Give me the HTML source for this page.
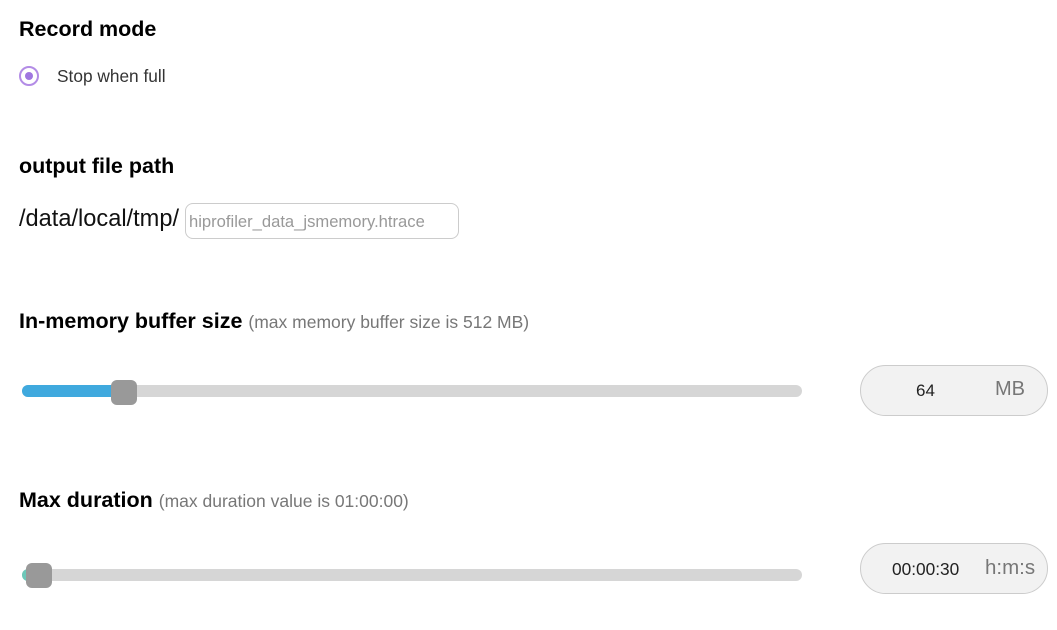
<!DOCTYPE html>
<html><head><style>
body{margin:0;width:1057px;height:630px;background:#fff;font-family:"Liberation Sans",sans-serif;position:relative;overflow:hidden}
.a{position:absolute;white-space:nowrap}
.t{font-weight:bold;font-size:21.5px;color:#000}
.g{font-weight:normal;font-size:17.5px;color:#777}
.track{position:absolute;left:22px;width:780px;height:12px;border-radius:6px;background:#d6d6d6}
.thumb{position:absolute;width:26px;height:25px;border-radius:6px;background:#999}
.box{position:absolute;left:860px;width:188px;height:51px;border-radius:26px;background:#f2f2f2;border:1px solid #ccc;box-sizing:border-box}
</style></head><body>
<div class="a t" style="left:19px;top:17px">Record mode</div>
<div class="a" style="left:19px;top:66px;width:20px;height:20px;border:2px solid #b38ce6;border-radius:50%;box-sizing:border-box"></div>
<div class="a" style="left:25px;top:72px;width:8px;height:8px;background:#a077e0;border-radius:50%"></div>
<div class="a" style="left:57px;top:66px;font-size:17.3px;color:#333">Stop when full</div>

<div class="a t" style="left:19px;top:154px">output file path</div>
<div class="a" style="left:19px;top:206px;font-size:23.6px;color:#111">/data/local/tmp/</div>
<div class="a" style="left:185px;top:203px;width:274px;height:36px;border:1px solid #ccc;border-radius:8px;box-sizing:border-box"></div>
<div class="a" style="left:189px;top:212px;font-size:16.6px;color:#999">hiprofiler_data_jsmemory.htrace</div>

<div class="a t" style="left:19px;top:309px">In-memory buffer size <span class="g">(max memory buffer size is 512 MB)</span></div>
<div class="track" style="top:385px"></div>
<div class="a" style="left:22px;top:385px;width:100px;height:12px;border-radius:6px;background:#3fa9de"></div>
<div class="thumb" style="left:111px;top:380px"></div>
<div class="box" style="top:365px"></div>
<div class="a" style="left:916px;top:381px;font-size:17px;color:#222">64</div>
<div class="a" style="left:995px;top:378px;font-size:20px;color:#777">MB</div>

<div class="a t" style="left:19px;top:488px">Max duration <span class="g">(max duration value is 01:00:00)</span></div>
<div class="track" style="top:569px"></div>
<div class="a" style="left:22px;top:569px;width:12px;height:12px;border-radius:6px;background:#6cc7b8"></div>
<div class="thumb" style="left:26px;top:563px"></div>
<div class="box" style="top:543px"></div>
<div class="a" style="left:892px;top:559px;font-size:17.3px;color:#222">00:00:30</div>
<div class="a" style="left:985px;top:556px;font-size:20.5px;color:#777">h:m:s</div>
</body></html>
